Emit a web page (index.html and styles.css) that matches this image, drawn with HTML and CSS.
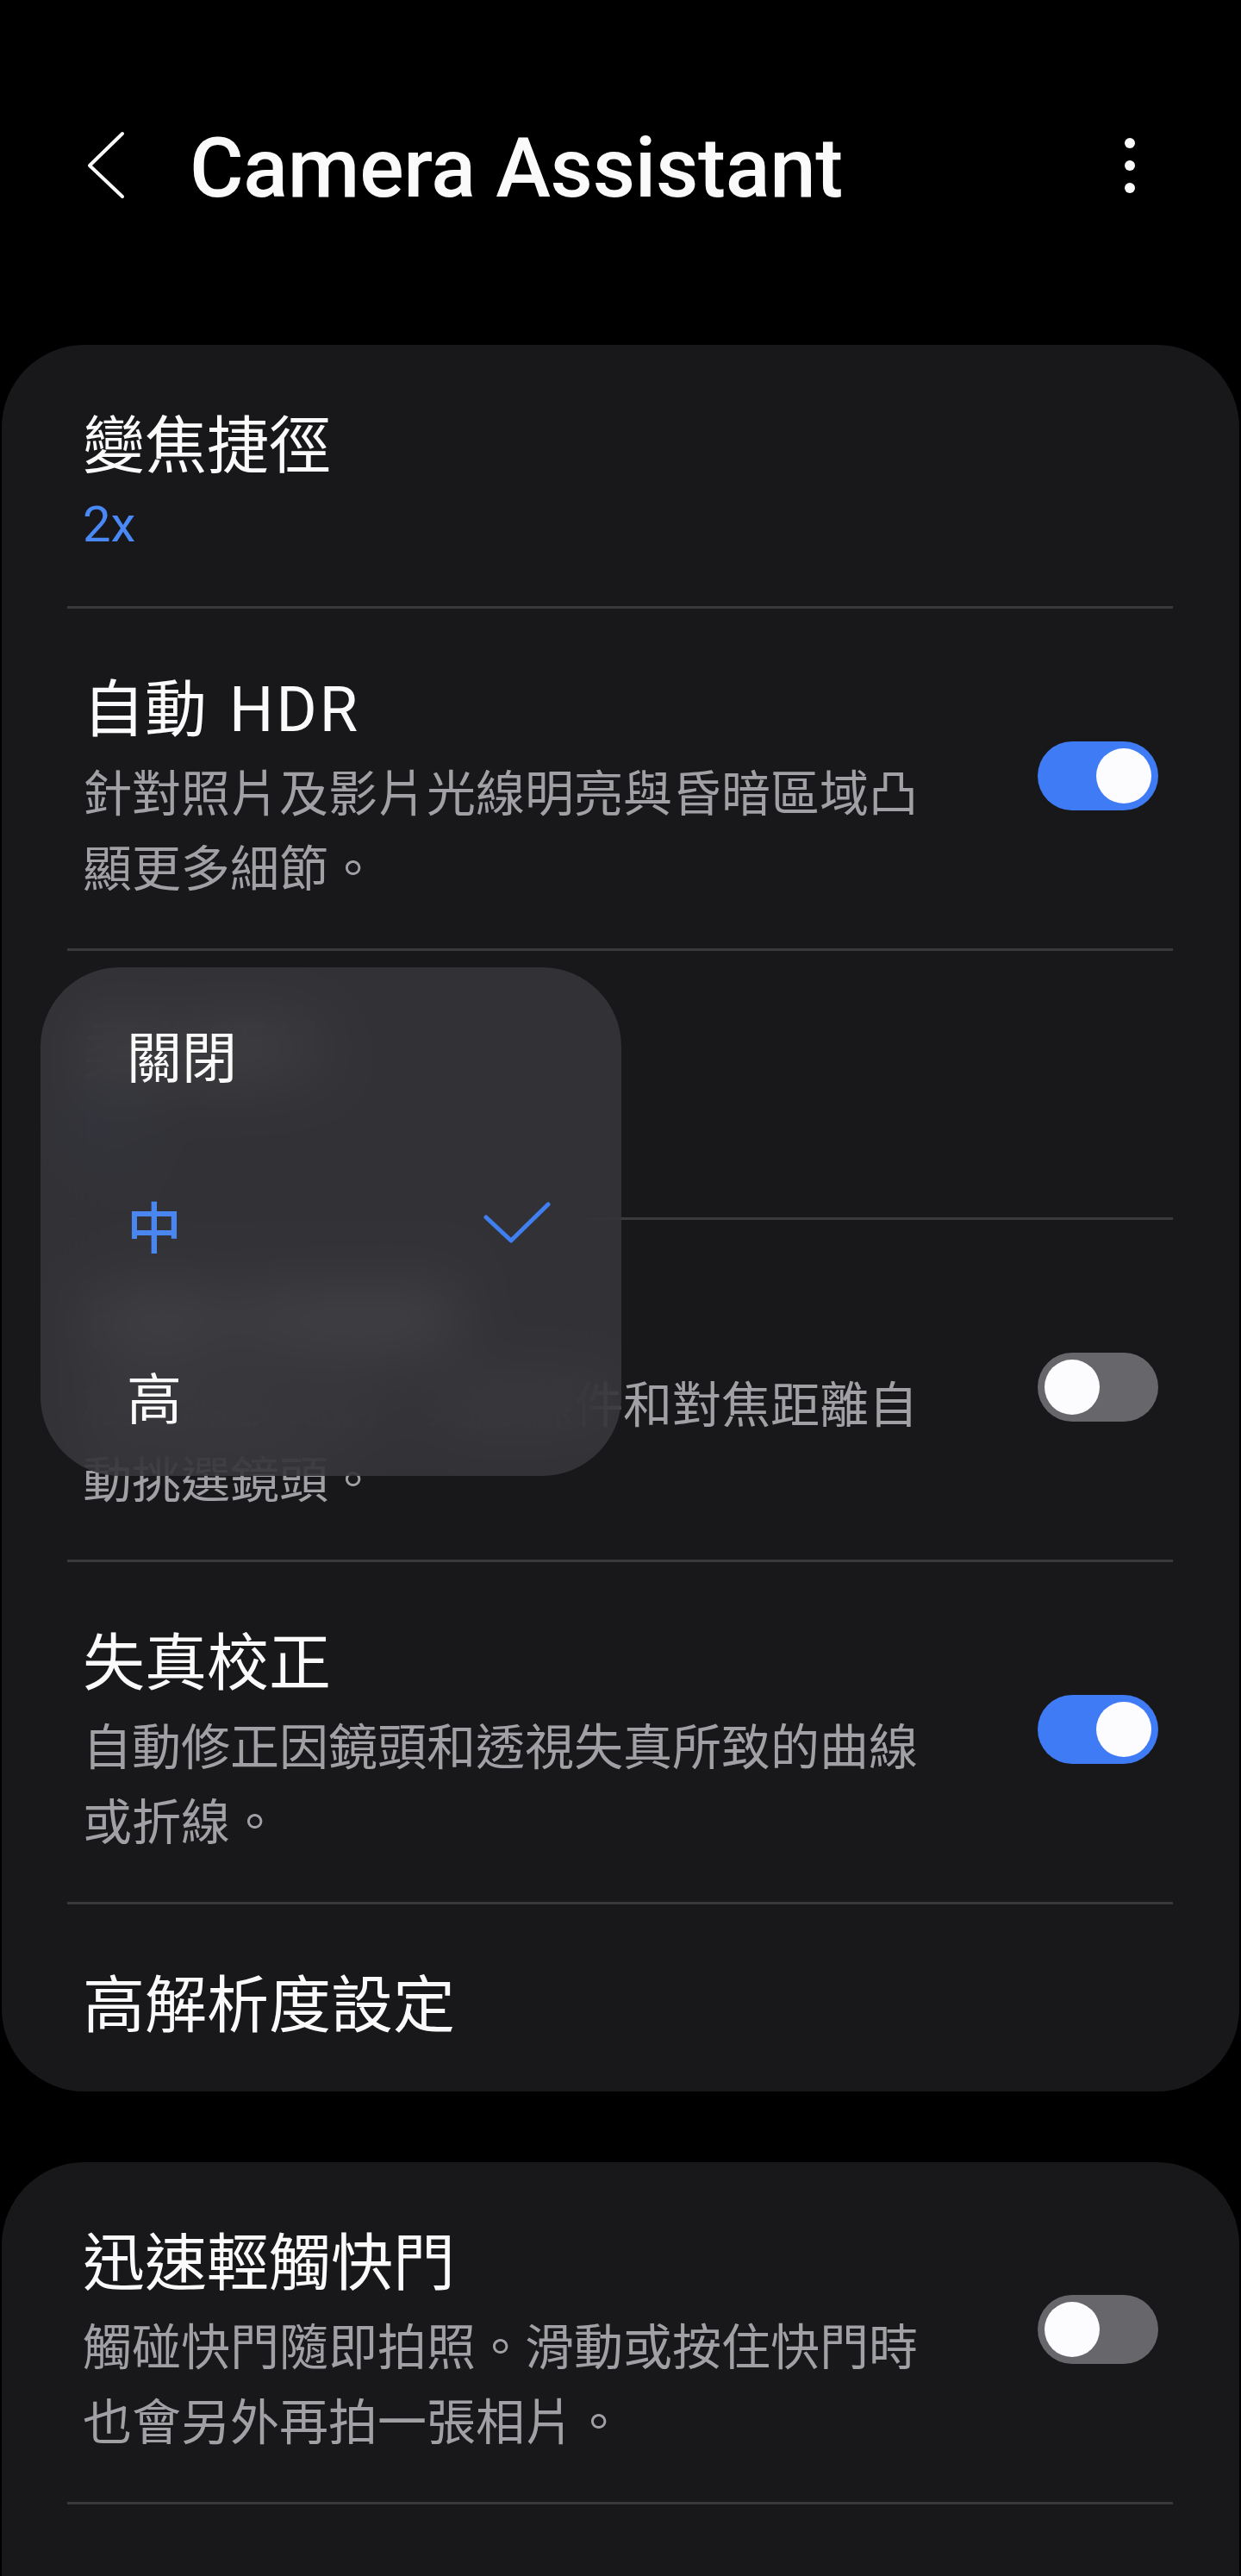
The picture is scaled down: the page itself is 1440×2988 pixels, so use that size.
FILE: index.html
```html
<!DOCTYPE html>
<html lang="zh-Hant">
<head>
<meta charset="utf-8">
<title>Camera Assistant</title>
<link rel="stylesheet" href="styles.css">
</head>
<body>
<div class="screen">
  <header class="appbar">
    <span class="back">
      <svg width="46" height="84" viewBox="0 0 46 84"><path d="M42 5 L4 42 L42 78" fill="none" stroke="#fafafa" stroke-width="4" stroke-linecap="round" stroke-linejoin="round"/></svg>
    </span>
    <h1 class="title">Camera Assistant</h1>
    <span class="more"><i></i><i></i><i></i></span>
  </header>

  <section class="card">
    <div class="row row--value">
      <div class="text">
        <div class="t">變焦捷徑</div>
        <div class="value">2x</div>
      </div>
    </div>
    <div class="row">
      <div class="text">
        <div class="t">自動<span class="latin">HDR</span></div>
        <div class="sub">針對照片及影片光線明亮與昏暗區域凸顯更多細節。</div>
      </div>
      <span class="switch switch--on"><span class="knob"></span></span>
    </div>
    <div class="row row--value row--tall">
      <div class="text">
        <div class="t">柔化照片</div>
        <div class="value">中</div>
      </div>
    </div>
    <div class="row">
      <div class="text">
        <div class="t">自動切換鏡頭</div>
        <div class="sub">根據縮放比例、光線條件和對焦距離自動挑選鏡頭。</div>
      </div>
      <span class="switch"><span class="knob"></span></span>
    </div>
    <div class="row">
      <div class="text">
        <div class="t">失真校正</div>
        <div class="sub">自動修正因鏡頭和透視失真所致的曲線或折線。</div>
      </div>
      <span class="switch switch--on"><span class="knob"></span></span>
    </div>
    <div class="row row--single">
      <div class="text">
        <div class="t">高解析度設定</div>
      </div>
    </div>
  </section>

  <section class="card card--second">
    <div class="row">
      <div class="text">
        <div class="t">迅速輕觸快門</div>
        <div class="sub">觸碰快門隨即拍照。滑動或按住快門時也會另外再拍一張相片。</div>
      </div>
      <span class="switch"><span class="knob"></span></span>
    </div>
    <div class="row row--single row--empty"></div>
  </section>

  <div class="menu">
    <div class="opt">關閉</div>
    <div class="opt opt--on">中
      <svg class="check" width="80" height="48" viewBox="0 0 80 48"><path d="M4 18 L33 45 L76 3" fill="none" stroke="#3f7fef" stroke-width="5" stroke-linecap="round" stroke-linejoin="round"/></svg>
    </div>
    <div class="opt">高</div>
  </div>
</div>
</body>
</html>
```

FILE: styles.css
```css
html, body {
  margin: 0;
  padding: 0;
  background: #000;
  height: 2988px;
  overflow: hidden;
}

body {
  font-family: Roboto, "Noto Sans CJK TC", sans-serif;
  color: #fafafa;
}

.screen {
  position: relative;
  width: 1440px;
  height: 2988px;
  overflow: hidden;
}

/* App bar */
.appbar {
  display: flex;
  align-items: center;
  height: 96px;
  padding: 147px 0 157px;
}

.back {
  display: flex;
  width: 46px;
  height: 84px;
  margin-left: 100px;
  margin-top: -6px;
}

.title {
  margin: 0 0 0 74px;
  font-size: 96px;
  font-weight: 500;
  line-height: 96px;
  letter-spacing: -0.3px;
  color: #fafafa;
}

.more {
  display: flex;
  flex-direction: column;
  gap: 14px;
  margin-left: auto;
  margin-right: 123px;
  margin-top: -6px;
}

.more i {
  display: block;
  width: 12px;
  height: 12px;
  border-radius: 50%;
  background: #fafafa;
}

/* Cards */
.card {
  margin: 0 2px;
  background: #18181a;
  border-radius: 96px;
}

.card--second {
  margin-top: 82px;
  padding-bottom: 200px;
}

.row {
  display: flex;
  align-items: center;
  margin: 0 77px 0 76px;
  padding: 70px 17px 48px 18px;
  border-bottom: 3px solid #3a3a3d;
}

.row--value {
  padding-bottom: 53px;
}

.row--tall {
  padding-bottom: 59px;
}

.row--single {
  padding-bottom: 51px;
  border-bottom: none;
}

.row--empty {
  height: 96px;
}

.text {
  flex: 1;
  min-width: 0;
}

.t {
  font-size: 72px;
  line-height: 96px;
  color: #fafafa;
}

.latin {
  margin-left: 26px;
  letter-spacing: 3px;
}

.sub {
  max-width: 990px;
  margin-top: 6px;
  font-size: 57px;
  line-height: 87px;
  color: #a0a0a5;
}

.value {
  font-size: 58px;
  line-height: 84px;
  color: #4a88f5;
}

/* Switch */
.switch {
  display: flex;
  align-items: center;
  justify-content: flex-start;
  flex: none;
  box-sizing: border-box;
  width: 140px;
  height: 80px;
  padding: 0 8px;
  margin-bottom: 28px;
  border-radius: 40px;
  background: #67676b;
}

.switch--on {
  justify-content: flex-end;
  background: #3e7bf5;
}

.knob {
  width: 64px;
  height: 64px;
  border-radius: 50%;
  background: #fcfcff;
}

/* Popup menu */
.menu {
  position: absolute;
  left: 47px;
  top: 1122px;
  width: 674px;
  height: 590px;
  box-sizing: border-box;
  padding-top: 1px;
  border-radius: 92px;
  background: rgba(56, 56, 61, 0.82);
  -webkit-backdrop-filter: blur(36px);
  backdrop-filter: blur(36px);
  overflow: hidden;
}

.opt {
  display: flex;
  align-items: center;
  height: 198px;
  padding: 0 81px 0 100px;
  font-size: 64px;
  color: #fafafa;
}

.opt--on {
  justify-content: space-between;
  color: #4a86f0;
  font-weight: 500;
}

.check {
  margin-bottom: 4px;
}
```
